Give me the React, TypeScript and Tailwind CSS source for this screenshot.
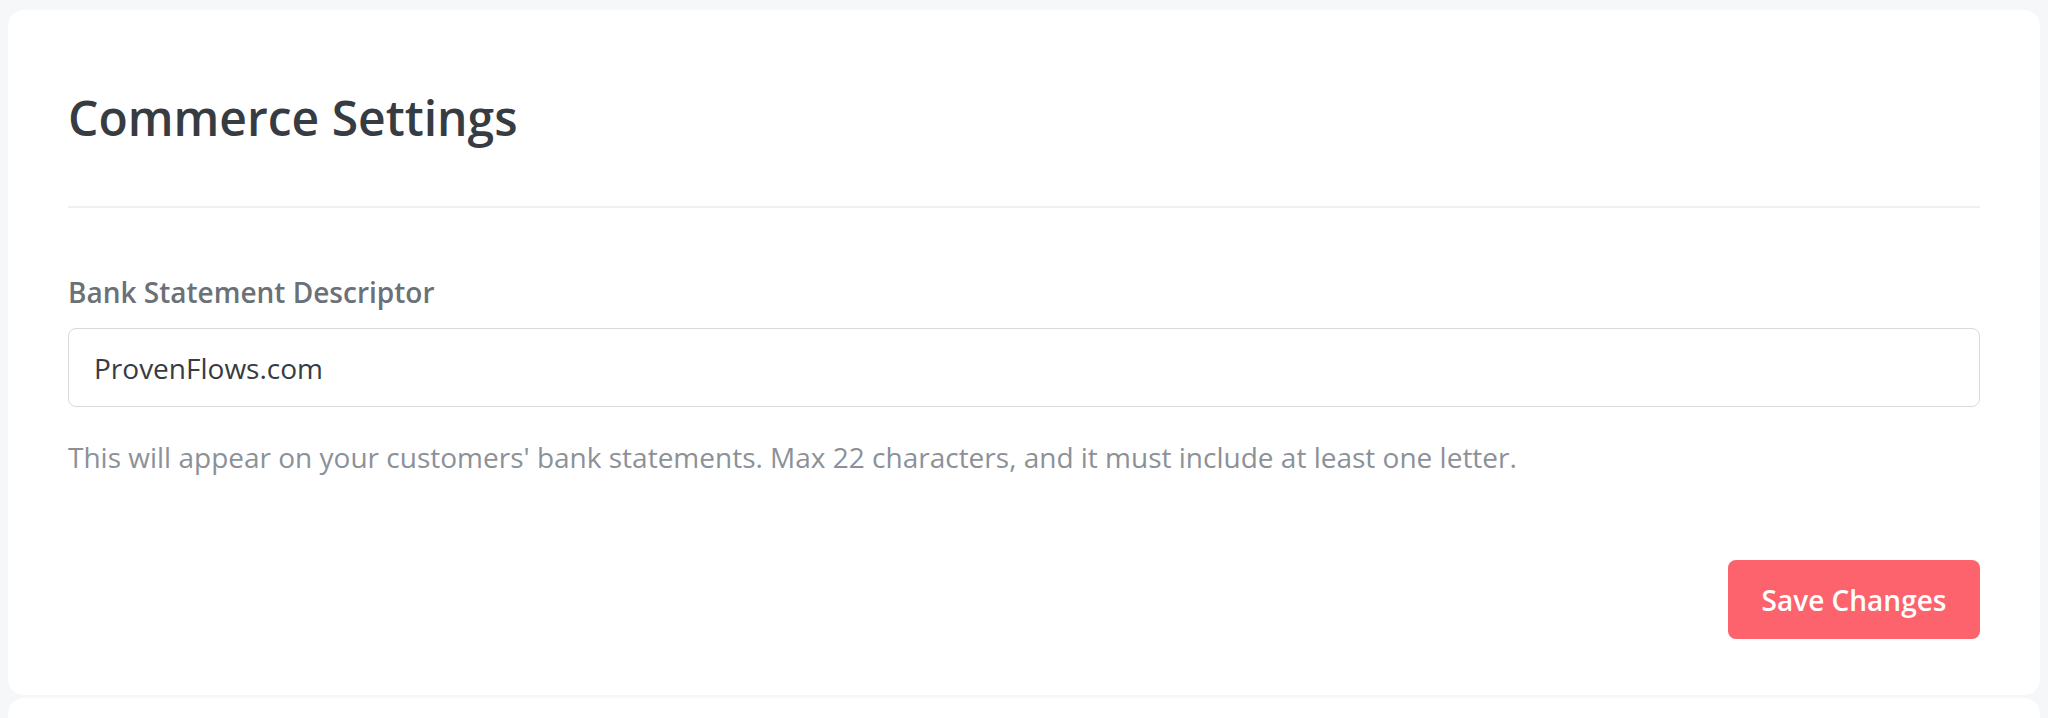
export default function App() {
  return (
    <div
      className="min-h-screen bg-[#f6f7f9] pl-[8px] pr-[8px] pt-[10px]"
      style={{ fontFamily: '"Open Sans", "Noto Sans", sans-serif' }}
    >
      {/* Settings card */}
      <div className="bg-white rounded-[16px] px-[60px] pt-[78px] pb-[56px]">
        <h1 className="text-[48px] leading-[60px] font-semibold text-[#363c42]">Commerce Settings</h1>
        <div className="mt-[58px] h-[2px] bg-[#eef1f4]" />

        <label className="block mt-[65px] text-[28px] leading-[38px] font-semibold text-[#6b7177]">
          Bank Statement Descriptor
        </label>
        <input
          className="block mt-[17px] w-full h-[79px] rounded-[8px] border border-[#d6dadf] px-[25px] text-[28px] text-[#363c42] outline-none"
          defaultValue="ProvenFlows.com"
        />
        <p className="mt-[31px] text-[28px] leading-[38px] text-[#8c9198]">
          This will appear on your customers' bank statements. Max 22 characters, and it must include at least one letter.
        </p>

        <div className="flex justify-end mt-[84px]">
          <button className="w-[252px] h-[79px] rounded-[8px] bg-[#fc636d] text-white text-[28px] font-semibold">
            Save Changes
          </button>
        </div>
      </div>
      <div className="mt-[3px] bg-white rounded-t-[16px] h-[40px]" />
    </div>
  );
}
